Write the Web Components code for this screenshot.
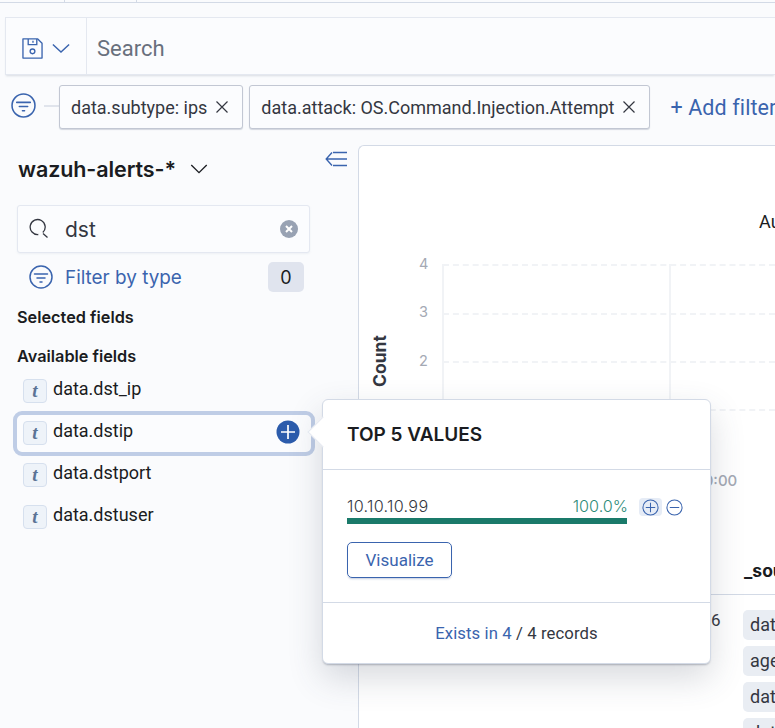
<!DOCTYPE html>
<html><head><meta charset="utf-8">
<style>
html,body{margin:0;padding:0;width:775px;height:728px;overflow:hidden;background:#fafbfd}
body{font-family:Roboto,sans-serif;color:#343741}
</style></head><body>
<app-page></app-page>
<script>
const el=(name,html)=>customElements.define(name,class extends HTMLElement{constructor(){super();this.attachShadow({mode:'open'}).innerHTML=html}});
const filterIcon=(s)=>`<svg width="${s}" height="${s}" viewBox="0 0 24 24" fill="none" stroke="#3a64ae" stroke-width="1.5" stroke-linecap="round"><circle cx="12" cy="12" r="11"/><path d="M5.5 9h13M8 13h8M11 17h2"/></svg>`;
el('top-strip',`<style>:host{display:flex;height:2px;border-bottom:1px solid #d3dae6;box-sizing:content-box}
i{display:block;border-right:1px solid #d3dae6;height:2px}</style><i style="width:64px"></i><i style="width:71px"></i>`);
el('query-bar',`<style>:host{display:flex;height:58px;margin:14px 0 0 5px;border:1px solid #e4e8f0;border-right:0;box-shadow:0 2px 2px -1px rgba(152,162,179,.35);background:#fbfcfe;box-sizing:border-box}
.menu{width:81px;border-right:1px solid #e4e8f0;display:flex;align-items:center;padding:5px 0 0 16px;gap:9px;box-sizing:border-box}
.s{padding-left:10px;font:22px/62px Roboto,sans-serif;color:#69707d}</style>
<div class="menu"><svg width="21" height="21" viewBox="0 0 22 22" fill="none" stroke="#3a64ae" stroke-width="1.4"><path d="M1 1h15.5L21 5.5V21H1z" stroke-linejoin="round"/><path d="M6.5 1v6h9V1M11.5 3v2"/><circle cx="11" cy="14" r="2.5"/></svg>
<svg width="18" height="11" viewBox="0 0 20 12" fill="none" stroke="#3a64ae" stroke-width="1.6"><path d="M1 1.5l9 8.5 9-8.5"/></svg></div>
<div class="s">Search</div>`);
el('filter-pill',`<style>:host{display:inline-flex;flex:none;align-items:center;height:44px;box-sizing:border-box;border:1px solid #c2c7d3;border-radius:3px;background:#fbfcfe;box-shadow:0 1px 1px rgba(152,162,179,.4);padding:0 13px 0 11px;font:18px Roboto,sans-serif;color:#343741;gap:8px;white-space:nowrap}</style><slot></slot><svg width="14" height="14" viewBox="0 0 14 14" stroke="#343741" stroke-width="1.2"><path d="M1.5 1.5l11 11M12.5 1.5l-11 11"/></svg>`);
el('filter-bar',`<style>:host{display:flex;align-items:center;height:44px;margin-top:10px;padding-left:11px;white-space:nowrap}
svg.f{margin-top:-3px;flex:none}
.c{flex:none;width:15px;height:2px;background:#e0e4ec;margin:-3px 0 0 8px}
filter-pill{margin-right:6px}
.add{flex:none;margin-left:14px;font:21.5px Roboto,sans-serif;color:#3a64ae;letter-spacing:.1px}</style>
${filterIcon(25).replace('<svg','<svg class="f"')}<div class="c"></div><filter-pill>data.subtype: ips</filter-pill><filter-pill>data.attack: OS.Command.Injection.Attempt</filter-pill><div class="add">+ Add filter</div>`);
el('field-row',`<style>:host{display:flex;align-items:center;height:42px;box-sizing:border-box;padding-left:7px;font:18px Roboto,sans-serif;color:#1a1c21;margin:0;position:relative}
:host([active]){border:4px solid #bfcde6;border-radius:9px;background:#fbfcfe;padding-left:6px;margin:-1.5px -4px -1.5px -3px;height:45px}
.t{width:24px;height:24px;box-sizing:border-box;border:1px solid #d6e0ee;border-radius:4px;background:#eef3f9;display:flex;align-items:center;justify-content:center;margin-right:6px;color:#5b7396;font:italic bold 19px "Liberation Serif",serif}
.l{margin-top:-6px}
.p{display:none;position:absolute;right:11px;top:50%;margin-top:-13px}
:host([active]) .p{display:block}</style>
<span class="t">t</span><span class="l"><slot></slot></span>
<svg class="p" width="24" height="24" viewBox="0 0 24 24"><circle cx="12" cy="12" r="11.5" fill="#2c5cac"/><path d="M12 5v14M5 12h14" stroke="#fff" stroke-width="1.7"/></svg>`);
el('field-sidebar',`<style>:host{display:block;width:358px;flex:none;box-sizing:border-box;position:relative}
.head{display:flex;align-items:center;justify-content:space-between;height:40px;margin-top:4px;padding:0 11px 0 18px}
.name{display:flex;align-items:center;gap:14px;font:600 21.5px Inter,sans-serif;color:#1a1c21;letter-spacing:-.1px}
.col{align-self:flex-start;margin-top:2px}
.search{margin:16px 48px 0 17px;height:48px;box-sizing:border-box;border:1.5px solid #e4e8f1;border-radius:3px;background:#fbfcfe;display:flex;align-items:center;padding:0 11px 0 10px;box-shadow:0 1px 2px rgba(152,162,179,.12)}
.search span{flex:1;margin-left:15px;font:21px Inter,sans-serif;color:#343741}
.ftype{display:flex;align-items:center;margin:9px 54px 0 29px;height:30px}
.ftype b{flex:1;font:400 18.9px Inter,sans-serif;color:#3a64ae;margin-left:12px}
.ftype i{font:400 18px Inter,sans-serif;font-style:normal;background:#e0e4ee;color:#1a1c21;border-radius:5px;width:36px;height:30px;display:flex;align-items:center;justify-content:center}
h4{font:600 16.3px Inter,sans-serif;color:#1a1c21;margin:0 0 0 17px;height:18px;line-height:18px}
.list{margin:5px 47px 0 16px}</style>
<div class="head"><div class="name">wazuh-alerts-*<svg width="18" height="10" viewBox="0 0 19 11" fill="none" stroke="#1a1c21" stroke-width="1.5"><path d="M1 1.2l8.5 8.3L18 1.2"/></svg></div>
<svg class="col" width="22" height="16" viewBox="0 0 22 16" fill="none" stroke="#3a64ae" stroke-width="1.4"><path d="M7 1.5L1.2 8 7 14.5M1.5 8H22M8 1.5h14M8 14.5h14"/></svg></div>
<div class="search"><svg width="22" height="22" viewBox="0 0 22 22" fill="none" stroke="#343741" stroke-width="1.3"><path d="M14.8 14.5a7.5 7.5 0 1 0-4.5 2"/><path d="M15 15.5l4.5 4"/></svg><span>dst</span>
<svg width="18" height="18" viewBox="0 0 18 18"><circle cx="9" cy="9" r="9" fill="#98a2b3"/><path d="M6 6l6 6M12 6l-6 6" stroke="#fff" stroke-width="2"/></svg></div>
<div class="ftype">${filterIcon(24)}<b>Filter by type</b><i>0</i></div>
<h4 style="margin-top:16px">Selected fields</h4><h4 style="margin-top:21px">Available fields</h4>
<div class="list"><field-row>data.dst_ip</field-row><field-row active>data.dstip</field-row><field-row>data.dstport</field-row><field-row>data.dstuser</field-row></div>`);
el('chart-panel',`<style>:host{display:block;flex:1;min-width:0;height:600px;box-sizing:border-box;border:1px solid #d3dae6;border-right:0;border-bottom:0;border-top-left-radius:6px;background:#fff;position:relative;overflow:hidden}
.abs{position:absolute;white-space:nowrap}
.tick{font:14.5px Inter,sans-serif;color:#a4a9b4}
.h{left:84px;right:0;border-top:2px dashed #f1f3f6;height:0}
.v{width:0;top:118px;border-left:2px solid #f1f3f6}
.tag{left:384px;height:30px;width:60px;background:#e9edf3;border-radius:5px;padding-left:7px;box-sizing:border-box;font:18px/30px Roboto,sans-serif;color:#343741}</style>
<div class="abs" style="left:400px;top:65px;font:18px Roboto,sans-serif;color:#1a1c21">Aug</div>
<div class="abs tick" style="left:60px;top:109px">4</div><div class="abs tick" style="left:60px;top:157px">3</div><div class="abs tick" style="left:60px;top:206px">2</div>
<div class="abs" style="left:10px;top:186px;height:58px;writing-mode:vertical-rl;transform:rotate(180deg);font:700 17.5px Inter,sans-serif;color:#343741;text-align:center">Count</div>
<div class="abs h" style="top:118px"></div><div class="abs h" style="top:167px"></div><div class="abs h" style="top:215px"></div><div class="abs h" style="top:263px"></div>
<div class="abs v" style="left:83px;height:190px"></div><div class="abs v" style="left:310px;height:190px"></div>
<div class="abs tick" style="left:335px;top:325px;font-size:15px;font-weight:500">00:00</div>
<div class="abs" style="left:385px;top:414px;font:700 17.5px Inter,sans-serif;color:#1a1c21">_source</div>
<div class="abs" style="left:0;right:0;top:448px;border-top:1px solid #d3dae6"></div>
<div class="abs" style="left:352px;top:464px;font:17px Roboto,sans-serif;color:#343741">6</div>
<div class="abs tag" style="top:464px">data</div><div class="abs tag" style="top:500px">agent</div><div class="abs tag" style="top:536px">data</div><div class="abs tag" style="top:572px">data</div>`);
el('top-values',`<style>:host{display:block;width:389px;height:265px;box-sizing:border-box;background:#fff;border:1px solid #d3dae6;border-radius:6px;box-shadow:0 2px 2px -1px rgba(60,70,90,.35),0 14px 34px rgba(60,70,90,.2);position:relative}
.arrow{position:absolute;left:-11px;top:21px;width:22px;height:22px;background:#fff;transform:rotate(45deg);border-left:1px solid #e4e8f0;border-bottom:1px solid #e4e8f0;box-sizing:border-box}
header{position:relative;height:70px;border-bottom:1px solid #d3dae6;box-sizing:border-box;padding:23px 24px 0;font:600 19px/24px Inter,sans-serif;color:#1a1c21}
.body{height:133px;border-bottom:1px solid #d3dae6;box-sizing:border-box;padding:26px 24px 0;position:relative}
.row{display:flex;align-items:flex-start}
.bar{width:280px}.txt{display:flex;justify-content:space-between;font:16.2px/20px Inter,sans-serif;font-weight:300;color:#343741}
.txt span{letter-spacing:.3px}
.txt em{font-style:normal;color:#2e8b78;margin-right:-1px}
.fill{height:6px;background:#1a7a6a;margin-top:2px}
.ic{display:flex;gap:3px;margin-left:12px;margin-top:2px}
.ic span{width:23px;height:18px;display:flex;align-items:center;justify-content:center;border-radius:4px}
.ic span:first-child{background:#e6ecf6}
.btn{display:flex;align-items:center;justify-content:center;margin-top:18px;width:105px;height:36px;box-sizing:border-box;border:1px solid #3a64ae;border-radius:5px;color:#3a64ae;font:17px Roboto,sans-serif;box-shadow:0 2px 2px -1px rgba(60,90,150,.3)}
footer{text-align:center;font:16.7px/62px Roboto,sans-serif;color:#343741;letter-spacing:.1px}
footer a{color:#3a64ae}</style>
<div class="arrow"></div><header>TOP 5 VALUES</header>
<div class="body"><div class="row"><div class="bar"><div class="txt"><span>10.10.10.99</span><em>100.0%</em></div><div class="fill"></div></div>
<div class="ic"><span><svg width="17" height="17" viewBox="0 0 18 18" fill="none" stroke="#3a64ae" stroke-width="1.1"><circle cx="9" cy="9" r="8"/><path d="M9 4v10M4 9h10"/></svg></span><span style="width:18px"><svg width="17" height="17" viewBox="0 0 18 18" fill="none" stroke="#3a64ae" stroke-width="1.1"><circle cx="9" cy="9" r="8"/><path d="M4 9h10"/></svg></span></div></div>
<div class="btn">Visualize</div></div>
<footer><a>Exists in 4</a> / 4 records</footer>`);
el('app-page',`<style>:host{display:block;width:775px;height:728px;position:relative;overflow:hidden;background:#fafbfd}
.main{display:flex;margin-top:16px}
top-values{position:absolute;left:322px;top:399px}</style>
<top-strip></top-strip><query-bar></query-bar><filter-bar></filter-bar>
<div class="main"><field-sidebar></field-sidebar><chart-panel></chart-panel></div>
<top-values></top-values>`);
</script></body></html>
